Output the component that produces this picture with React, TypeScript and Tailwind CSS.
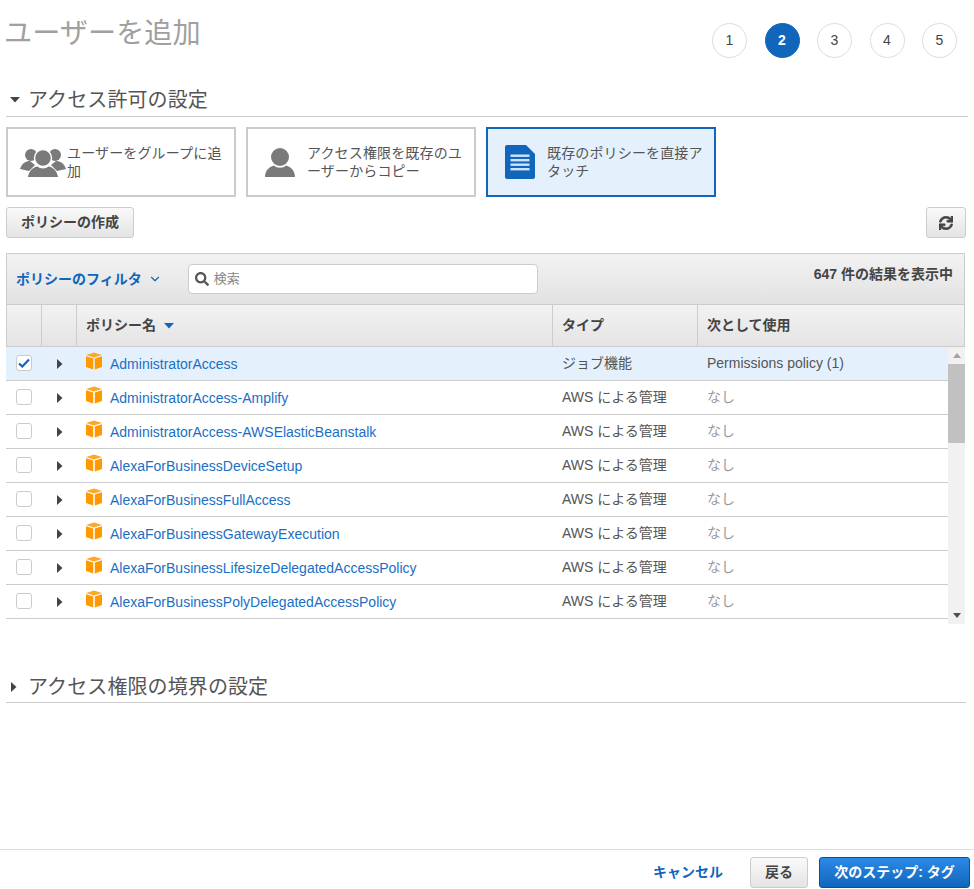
import { ChevronDown } from "lucide-react";
import { FaSearch, FaSync } from "react-icons/fa";

const FONT = "font-['Liberation_Sans','Noto_Sans_CJK_JP',sans-serif]";

const policies = [
  "AdministratorAccess",
  "AdministratorAccess-Amplify",
  "AdministratorAccess-AWSElasticBeanstalk",
  "AlexaForBusinessDeviceSetup",
  "AlexaForBusinessFullAccess",
  "AlexaForBusinessGatewayExecution",
  "AlexaForBusinessLifesizeDelegatedAccessPolicy",
  "AlexaForBusinessPolyDelegatedAccessPolicy",
];

function Box() {
  return (
    <svg width="18" height="18" viewBox="0 0 18 18" className="shrink-0">
      <path d="M9 0.5 L17 3 L9 5.6 L1 3 Z" fill="#ffa726" />
      <path d="M1 4.2 L8.2 6.6 V17.5 L1 15 Z" fill="#ff9900" />
      <path d="M17 4.2 L9.8 6.6 V17.5 L17 15 Z" fill="#ff9900" />
    </svg>
  );
}

function Caret({ down = false, color = "#444" }: { down?: boolean; color?: string }) {
  return down ? (
    <svg width="10" height="6" viewBox="0 0 10 6"><path d="M0 0 H10 L5 5.5 Z" fill={color} /></svg>
  ) : (
    <svg width="6" height="10" viewBox="0 0 6 10"><path d="M0 0 V10 L5.5 5 Z" fill={color} /></svg>
  );
}

function UsersIcon() {
  return (
    <svg width="46" height="30" viewBox="0 0 46 30" className="shrink-0">
      <circle cx="11" cy="8" r="6" fill="#7a7a7a" />
      <circle cx="35" cy="8" r="6" fill="#7a7a7a" />
      <path d="M0 22 C2 16 6 14 10 14 L15 18 L9 24 Z" fill="#7a7a7a" />
      <path d="M46 22 C44 16 40 14 36 14 L31 18 L37 24 Z" fill="#7a7a7a" />
      <circle cx="23" cy="11" r="8.5" fill="#7a7a7a" stroke="#fff" strokeWidth="1.5" />
      <path d="M8 30 C9 23 14 20 17.5 19.5 C20 22 26 22 28.5 19.5 C32 20 37 23 38 30 Z" fill="#7a7a7a" />
    </svg>
  );
}

function UserIcon() {
  return (
    <svg width="30" height="29" viewBox="0 0 30 29" className="shrink-0">
      <circle cx="15" cy="9" r="9" fill="#7a7a7a" />
      <path d="M0 29 C0 22 5 18.5 9 17.5 C12 20.5 18 20.5 21 17.5 C25 18.5 30 22 30 29 Z" fill="#7a7a7a" />
    </svg>
  );
}

function DocIcon() {
  return (
    <svg width="30" height="34" viewBox="0 0 30 34" className="shrink-0">
      <path d="M2 0 H21 L30 9 V32 A2 2 0 0 1 28 34 H2 A2 2 0 0 1 0 32 V2 A2 2 0 0 1 2 0 Z" fill="#1166bb" />
      <g fill="#cfe3f7">
        <rect x="5.5" y="9.5" width="19" height="2.4" />
        <rect x="5.5" y="14" width="19" height="2.4" />
        <rect x="5.5" y="18.5" width="19" height="2.4" />
        <rect x="5.5" y="23" width="19" height="2.4" />
      </g>
    </svg>
  );
}

function Card({ icon, text, active = false, pl }: { icon: React.ReactNode; text: React.ReactNode; active?: boolean; pl: string }) {
  return (
    <div
      className={`flex h-[70px] w-[230px] items-center border-2 text-[14px] leading-[18px] tracking-[0.15px] break-all text-[#555] [line-break:anywhere] ${pl} ${
        active ? "border-[#1166bb] bg-[#e4f1fd]" : "border-[#ccc] bg-white"
      }`}
    >
      {icon}
      {text}
    </div>
  );
}

function GrayButton({ children, className = "" }: { children: React.ReactNode; className?: string }) {
  return (
    <button className={`flex h-[31px] items-center justify-center rounded-[3px] border border-[#ccc] bg-gradient-to-b from-[#fafafa] to-[#e4e4e4] text-[14px] font-bold text-[#444] ${className}`}>
      {children}
    </button>
  );
}

function Step({ n, active = false }: { n: number; active?: boolean }) {
  return (
    <div
      className={`flex h-[35px] w-[35px] items-center justify-center rounded-full border text-[14px] ${
        active ? "border-[#1166bb] bg-[#1166bb] font-bold text-white" : "border-[#ddd] bg-white text-[#444]"
      }`}
    >
      {n}
    </div>
  );
}

export default function App() {
  return (
    <div className={`${FONT} flex h-[889px] w-[974px] flex-col overflow-hidden bg-white`}>
      <div className="flex h-[59px] items-start justify-between pl-[4px] pr-[17px]">
        <h1 className="mt-[15px] text-[28.2px] leading-[36px] font-normal text-[#a0a0a0]">ユーザーを追加</h1>
        <div className="mt-[23px] flex gap-[17.5px]">
          <Step n={1} />
          <Step n={2} active />
          <Step n={3} />
          <Step n={4} />
          <Step n={5} />
        </div>
      </div>

      <div className="mx-[6px] mt-[24px] flex h-[34px] items-center gap-[8px] border-b border-[#ccc] pl-[4px]">
        <Caret down />
        <span className="text-[20px] leading-[28px] tracking-[0.1px] text-[#555]">アクセス許可の設定</span>
      </div>

      <div className="mx-[6px] mt-[10px] flex gap-[10px]">
        <Card
          pl="pl-[12px] pr-[8px]"
          icon={<UsersIcon />}
          text={<span className="ml-[1px]">ユーザーをグループに追加</span>}
        />
        <Card
          pl="pl-[17px] pr-[6px]"
          icon={<UserIcon />}
          text={<span className="ml-[12px]">アクセス権限を既存のユーザーからコピー</span>}
        />
        <Card
          active
          pl="pl-[17px] pr-[8px]"
          icon={<DocIcon />}
          text={<span className="ml-[12px]">既存のポリシーを直接アタッチ</span>}
        />
      </div>

      <div className="mx-[6px] mt-[10px] mr-[8px] flex justify-between">
        <GrayButton className="w-[128px]">ポリシーの作成</GrayButton>
        <GrayButton className="w-[40px]"><FaSync size={14} color="#444" stroke="#444" strokeWidth={24} /></GrayButton>
      </div>

      <div className="mt-[15px] ml-[6px] w-[959px]">
        <div className="flex h-[52px] items-start border border-[#ccc] bg-gradient-to-b from-[#f2f2f2] to-[#e2e2e2] pl-[9px] pr-[11px]">
          <div className="mt-[15px] flex items-center gap-[6px] text-[14px] leading-[20px] font-bold text-[#1166bb]">
            ポリシーのフィルタ
            <ChevronDown size={14} strokeWidth={2} />
          </div>
          <div className="mt-[10px] ml-[26px] flex h-[30px] w-[350px] items-center gap-[5px] rounded-[4px] border border-[#ccc] bg-white pl-[6px]">
            <FaSearch size={14} color="#555" />
            <span className="text-[13px] text-[#888]">検索</span>
          </div>
          <div className="mt-[11px] ml-auto text-[14px] leading-[18px] font-bold text-[#444]">647 件の結果を表示中</div>
        </div>

        <div className="grid h-[42px] grid-cols-[35px_35px_476px_145px_1fr] border-x border-b border-[#ccc] bg-gradient-to-b from-[#f2f2f2] to-[#e4e4e4] text-[14px] font-bold text-[#444]">
          <div className="border-r border-[#ccc]" />
          <div className="border-r border-[#ccc]" />
          <div className="flex items-center gap-[8px] border-r border-[#ccc] pl-[9px]">
            ポリシー名 <Caret down color="#1166bb" />
          </div>
          <div className="flex items-center border-r border-[#ccc] pl-[9px]">タイプ</div>
          <div className="flex items-center pl-[9px]">次として使用</div>
        </div>

        <div className="flex h-[277px]">
          <div className="w-[942px]">
            {policies.map((p, i) => (
              <div
                key={p}
                className={`grid h-[34px] grid-cols-[35px_35px_476px_145px_1fr] items-center border-b border-[#ccc] text-[14px] ${
                  i === 0 ? "bg-[#e4f1fd]" : "bg-white"
                }`}
              >
                <div className="flex justify-center pl-[1px]">
                  <div className="-mt-[2px] flex h-[16px] w-[16px] items-center justify-center rounded-[3px] border border-[#ccc] bg-white">
                    {i === 0 && (
                      <svg width="12" height="10" viewBox="0 0 12 10">
                        <path d="M1 5.5 L4.3 8.5 L11 1.5" fill="none" stroke="#1166bb" strokeWidth="2.2" />
                      </svg>
                    )}
                  </div>
                </div>
                <div className="flex justify-center pl-[2px]"><Caret /></div>
                <div className="flex items-center pl-[9px]">
                  <div className="-mt-[6px]"><Box /></div>
                  <span className="mt-[2px] ml-[7px] text-[#1a6fc4]">{p}</span>
                </div>
                <div className="pl-[10px] text-[#555]">{i === 0 ? "ジョブ機能" : "AWS による管理"}</div>
                <div className={`pl-[10px] ${i === 0 ? "text-[#555]" : "text-[#999]"}`}>{i === 0 ? "Permissions policy (1)" : "なし"}</div>
              </div>
            ))}
          </div>
          <div className="flex w-[17px] flex-col items-center bg-[#f1f1f1]">
            <div className="flex h-[17px] items-center justify-center">
              <svg width="8" height="5" viewBox="0 0 8 5"><path d="M0 5 H8 L4 0 Z" fill="#a3a3a3" /></svg>
            </div>
            <div className="h-[79px] w-full bg-[#c1c1c1]" />
            <div className="flex-1" />
            <div className="flex h-[17px] items-center justify-center">
              <svg width="8" height="5" viewBox="0 0 8 5"><path d="M0 0 H8 L4 5 Z" fill="#505050" /></svg>
            </div>
          </div>
        </div>
      </div>

      <div className="mx-[6px] mt-[48px] mr-[8px] flex h-[31px] items-center gap-[11px] border-b border-[#ccc] pl-[5px]">
        <Caret />
        <span className="text-[20px] leading-[28px] tracking-[0.1px] text-[#555]">アクセス権限の境界の設定</span>
      </div>

      <div className="flex-1" />

      <div className="flex h-[40px] items-start justify-end gap-[11px] border-t border-[#ddd] pt-[7px] pr-[4px]">
        <span className="mr-[16px] text-[14px] leading-[30px] font-bold text-[#1166bb]">キャンセル</span>
        <GrayButton className="w-[58px]">戻る</GrayButton>
        <button className="flex h-[31px] w-[151px] items-center justify-center rounded-[3px] border border-[#0f4f91] bg-gradient-to-b from-[#2b8ae6] to-[#1166bb] text-[14px] font-bold text-white">
          次のステップ: タグ
        </button>
      </div>
    </div>
  );
}
